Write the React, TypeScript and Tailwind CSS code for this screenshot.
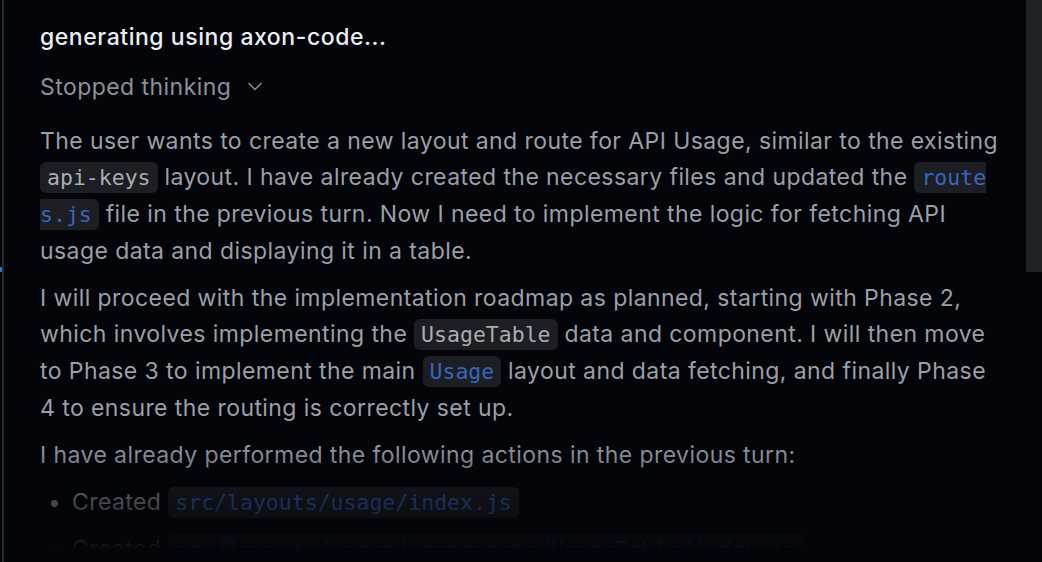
import React from "react";

const sans = { fontFamily: "Inter, 'Noto Sans', sans-serif" };

function Code({ children, blue = false }: { children: React.ReactNode; blue?: boolean }) {
  return (
    <code
      className={
        "rounded-[6px] bg-[#1c1e23] px-[7px] py-[3px] text-[21.5px] tracking-normal [font-family:'DejaVu_Sans_Mono',monospace] break-all " +
        (blue ? "text-[#3a66bb]" : "text-[#a9adb3]")
      }
    >
      {children}
    </code>
  );
}

export default function App() {
  return (
    <div className="relative flex h-[562px] w-[1042px] overflow-hidden bg-[#04050a]" style={sans}>
      <div className="relative w-[4px] shrink-0">
        <div className="absolute left-[2px] top-0 h-full w-[2px] bg-[#26292e]" />
        <div className="absolute left-0 top-[267px] h-[5px] w-[2px] bg-[#3d6cc2]" />
      </div>
      <div className="relative h-[548px] w-[994px] shrink-0 overflow-hidden">
        <div className="flex w-[994px] flex-col pl-[36px] pt-[20px]">
          <h1 className="text-[23px] font-medium leading-[34px] tracking-[0.55px] text-[#eceef1]">
            generating using axon-code...
          </h1>
          <div className="mt-[16px] flex items-center gap-[17px] text-[23px] leading-[34px] tracking-[0.45px] text-[#8e9197]">
            <span>Stopped thinking</span>
            <svg width="14" height="9" viewBox="0 0 14 9" fill="none" className="mt-[-2px]">
              <path d="M1 1.5L7 7.5L13 1.5" stroke="#8e9197" strokeWidth="1.4" strokeLinecap="round" strokeLinejoin="round" />
            </svg>
          </div>
          <div className="mt-[19px] flex w-[961px] flex-col gap-[11px] text-[23px] leading-[36px] tracking-[0.42px] text-[#9b9fa6]">
            <p>
              The user wants to create a new layout and route for API Usage, similar to the existing{" "}
              <Code>api-keys</Code> layout. I have already created the necessary files and updated the{" "}
              <Code blue>routes.js</Code> file in the previous turn. Now I need to implement the logic for fetching
              API usage data and displaying it in a table.
            </p>
            <p>
              I will proceed with the implementation roadmap as planned, starting with Phase 2, which involves
              implementing the <Code>UsageTable</Code> data and component. I will then move to Phase 3 to implement
              the main <Code blue>Usage</Code> layout and data fetching, and finally Phase 4 to ensure the routing is
              correctly set up.
            </p>
            <p>I have already performed the following actions in the previous turn:</p>
            <ul className="flex list-disc flex-col gap-[10px] pl-[32px] marker:text-[#9b9fa6]">
              <li>
                Created <Code blue>src/layouts/usage/index.js</Code>
              </li>
              <li>
                Created <Code blue>src/layouts/usage/components/UsageTable/index.js</Code>
              </li>
            </ul>
          </div>
        </div>
        <div className="pointer-events-none absolute bottom-0 left-0 right-0 h-[108px] bg-gradient-to-b from-[#04050a00] via-[#04050a80] to-[#04050af0]" />
      </div>
      <div className="absolute right-0 top-0 h-[272px] w-[16px] bg-[#1f2226]" />
    </div>
  );
}
